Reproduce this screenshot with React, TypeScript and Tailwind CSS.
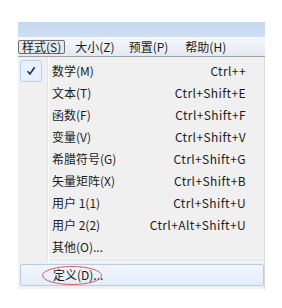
import React from 'react';

interface MenuItem {
  label: string;
  shortcut?: string;
  checked?: boolean;
}

const items: MenuItem[] = [
  { label: '数学(M)', shortcut: 'Ctrl++', checked: true },
  { label: '文本(T)', shortcut: 'Ctrl+Shift+E' },
  { label: '函数(F)', shortcut: 'Ctrl+Shift+F' },
  { label: '变量(V)', shortcut: 'Ctrl+Shift+V' },
  { label: '希腊符号(G)', shortcut: 'Ctrl+Shift+G' },
  { label: '矢量矩阵(X)', shortcut: 'Ctrl+Shift+B' },
  { label: '用户 1(1)', shortcut: 'Ctrl+Shift+U' },
  { label: '用户 2(2)', shortcut: 'Ctrl+Alt+Shift+U' },
  { label: '其他(O)...' },
];

const font = { fontFamily: '"Noto Sans CJK SC", "Noto Sans", sans-serif' };

export default function App() {
  return (
    <div
      className="w-[282px] h-[308px] bg-white overflow-hidden pt-[22px] pl-[18px] text-[12px] text-[#1b1b1b]"
      style={font}
    >
      <div className="w-[247px] flex flex-col">
        {/* window title strip */}
        <div className="h-[15px] bg-gradient-to-b from-[#c3d8f0] to-[#cfe0f3]" />

        {/* menubar */}
        <div className="h-[20px] flex items-center border-b border-[#9aa3ad] bg-gradient-to-b from-[#f6f8fb] to-[#e4e9f1]">
          <span className="h-[14px] flex items-center px-[3px] border border-[#6c6c6c] rounded-[2px] bg-[#e6e9ee] leading-none">
            样式(S)
          </span>
          <span className="ml-[10px] leading-none">大小(Z)</span>
          <span className="ml-[14px] leading-none">预置(P)</span>
          <span className="ml-[17px] leading-none">帮助(H)</span>
        </div>

        {/* dropdown */}
        <div className="bg-[#f0f0f0] border-r border-[#d9d9d9] pt-[3px] pb-[3px] relative">
          <div className="absolute left-[29px] top-0 bottom-[28px] w-[2px] border-l border-[#e2e3e3] bg-white" />
          {items.map((item) => (
            <div key={item.label} className="h-[22px] flex items-center relative">
              <div className="w-[34px] pl-[2px] flex items-center">
                {item.checked && (
                  <div className="w-[22px] h-[22px] rounded-[3px] border border-[#b8d0f0] bg-[#e8f0fb] flex items-center justify-center">
                    <svg width="10" height="10" viewBox="0 0 10 10">
                      <path d="M1.5 5.2 L4 8 L8.6 1.2" fill="none" stroke="#1d2f6b" strokeWidth="1.6" />
                    </svg>
                  </div>
                )}
              </div>
              <span className="flex-1 leading-none">{item.label}</span>
              <span className="pr-[18px] leading-none tracking-[0.4px]">{item.shortcut}</span>
            </div>
          ))}
          <div className="h-[6px] flex items-center pl-[30px]">
            <div className="flex-1 h-[2px] border-t border-[#e0e0e0] bg-white" />
          </div>
          <div className="h-[22px] ml-[2px] flex items-center relative rounded-[2px] border border-[#b4cdea] bg-gradient-to-b from-[#f2f6fc] to-[#e5edf8]">
            <span className="pl-[32px] leading-none">定义(D)...</span>
            <svg className="absolute left-[20px] top-[0px]" width="62" height="21" viewBox="0 0 62 21">
              <ellipse cx="31" cy="10.5" rx="29.5" ry="9" fill="none" stroke="#d65a6a" strokeWidth="1" />
            </svg>
          </div>
        </div>
      </div>
    </div>
  );
}
